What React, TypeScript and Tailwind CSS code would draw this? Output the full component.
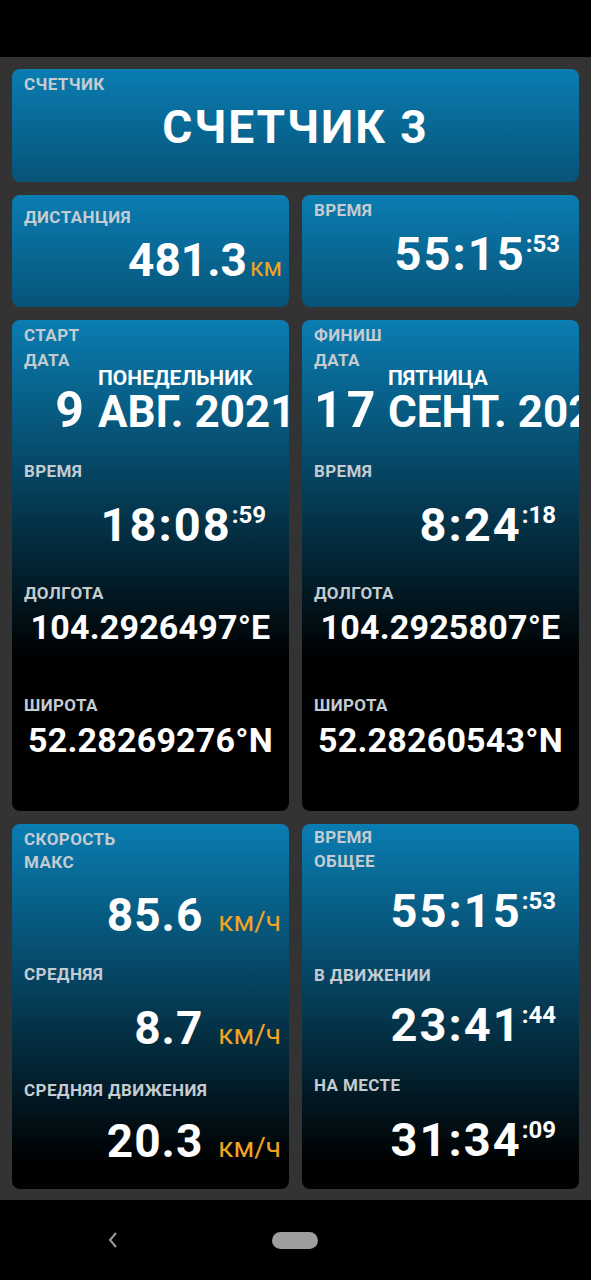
import React from "react";

const cardBg = "bg-[linear-gradient(180deg,#0a7db2_0px,#000_340px)]";

function Label({ children, className = "" }: { children: React.ReactNode; className?: string }) {
    return (
        <div className={`text-[17px] font-bold leading-[20px] tracking-[0.4px] text-[#c4ccd1] ${className}`}>
            {children}
        </div>
    );
}

function Time({ main, sec, className = "" }: { main: string; sec: string; className?: string }) {
    return (
        <div className={`flex justify-end items-start text-white font-bold ${className}`}>
            <span className="text-[47px] leading-[48px] tracking-[2px]">{main}</span>
            <span className="text-[24px] leading-[24px] mt-[2px]">:{sec}</span>
        </div>
    );
}

function Speed({ value, className = "" }: { value: string; className?: string }) {
    return (
        <div className={`flex justify-end items-baseline gap-[15px] ${className}`}>
            <span className="text-[46px] leading-[48px] font-bold text-white tracking-[1px]">{value}</span>
            <span className="text-[28px] leading-[30px] text-[#f0a422]">км/ч</span>
        </div>
    );
}

function Coord({ value, className = "" }: { value: string; className?: string }) {
    return (
        <div className={`text-center text-[34px] leading-[38px] font-bold text-white tracking-[0.2px] ${className}`}>
            {value}
        </div>
    );
}

function EndPoint({
    title,
    day,
    weekday,
    month,
    time,
    sec,
    lon,
    lat,
}: {
    title: string;
    day: string;
    weekday: string;
    month: string;
    time: string;
    sec: string;
    lon: string;
    lat: string;
}) {
    return (
        <div className={`flex-1 rounded-lg overflow-hidden ${cardBg} pt-[5px] pl-3`}>
            <Label>{title}</Label>
            <Label className="mt-[5px]">ДАТА</Label>
            <div className="flex items-baseline-last -mt-[4px]">
                <div className="w-[64px] shrink-0 text-right text-[50px] leading-[44px] font-bold text-white tracking-[4px] -mr-[4px]">
                    {day}
                </div>
                <div className="ml-[14px] flex flex-col min-w-0 whitespace-nowrap text-white font-bold">
                    <span className="text-[21px] leading-[24px]">{weekday}</span>
                    <span className="text-[44px] leading-[44px]">{month}</span>
                </div>
            </div>
            <Label className="mt-[27px]">ВРЕМЯ</Label>
            <Time main={time} sec={sec} className="mt-[20px] pr-[23px]" />
            <Label className="mt-[34px]">ДОЛГОТА</Label>
            <Coord value={lon} className="mt-[5px] pr-3" />
            <Label className="mt-[49px]">ШИРОТА</Label>
            <Coord value={lat} className="mt-[6px] pr-3" />
        </div>
    );
}

export default function App() {
    return (
        <div className="w-[591px] h-[1280px] bg-black flex flex-col font-['Roboto',sans-serif] overflow-hidden">
            <div className="h-[57px] shrink-0 bg-black" />

            <main className="h-[1143px] shrink-0 bg-[#333333] px-3 pt-3 flex flex-col gap-[13px]">
                {/* Counter name */}
                <div className={`h-[113px] shrink-0 rounded-lg ${cardBg} pt-[5px] pl-3`}>
                    <Label>СЧЕТЧИК</Label>
                    <div className="text-center text-[46px] leading-[48px] font-bold text-white tracking-[2px] mt-[9px] pr-3">
                        СЧЕТЧИК 3
                    </div>
                </div>

                {/* Distance / time */}
                <div className="h-[112px] shrink-0 flex gap-[13px]">
                    <div className={`flex-1 rounded-lg ${cardBg} pt-[12px] pl-3`}>
                        <Label>ДИСТАНЦИЯ</Label>
                        <div className="flex justify-end items-baseline pr-[7px] mt-[9px]">
                            <span className="text-[46px] leading-[48px] font-bold text-white">481.3</span>
                            <span className="text-[25px] leading-[26px] text-[#f0a422] ml-[3px]">км</span>
                        </div>
                    </div>
                    <div className={`flex-1 rounded-lg ${cardBg} pt-[5px] pl-3`}>
                        <Label>ВРЕМЯ</Label>
                        <Time main="55:15" sec="53" className="mt-[10px] pr-[19px]" />
                    </div>
                </div>

                {/* Start / finish */}
                <div className="h-[491px] shrink-0 flex gap-[13px]">
                    <EndPoint
                        title="СТАРТ"
                        day="9"
                        weekday="ПОНЕДЕЛЬНИК"
                        month="АВГ. 2021"
                        time="18:08"
                        sec="59"
                        lon="104.2926497°E"
                        lat="52.28269276°N"
                    />
                    <EndPoint
                        title="ФИНИШ"
                        day="17"
                        weekday="ПЯТНИЦА"
                        month="СЕНТ. 2021"
                        time="8:24"
                        sec="18"
                        lon="104.2925807°E"
                        lat="52.28260543°N"
                    />
                </div>

                {/* Speed / time stats */}
                <div className="h-[365px] shrink-0 flex gap-[13px]">
                    <div className={`flex-1 rounded-lg ${cardBg} pt-[5px] pl-3`}>
                        <Label>СКОРОСТЬ</Label>
                        <Label className="mt-[3px]">МАКС</Label>
                        <Speed value="85.6" className="mt-[19px] pr-[8px]" />
                        <Label className="mt-[25px]">СРЕДНЯЯ</Label>
                        <Speed value="8.7" className="mt-[20px] pr-[8px]" />
                        <Label className="mt-[28px]">СРЕДНЯЯ ДВИЖЕНИЯ</Label>
                        <Speed value="20.3" className="mt-[17px] pr-[8px]" />
                    </div>
                    <div className={`flex-1 rounded-lg ${cardBg} pt-[3px] pl-3`}>
                        <Label>ВРЕМЯ</Label>
                        <Label className="mt-[4px]">ОБЩЕЕ</Label>
                        <Time main="55:15" sec="53" className="mt-[16px] pr-[23px]" />
                        <Label className="mt-[30px]">В ДВИЖЕНИИ</Label>
                        <Time main="23:41" sec="44" className="mt-[16px] pr-[23px]" />
                        <Label className="mt-[26px]">НА МЕСТЕ</Label>
                        <Time main="31:34" sec="09" className="mt-[21px] pr-[23px]" />
                    </div>
                </div>
            </main>

            {/* Navigation bar */}
            <nav className="h-[80px] shrink-0 bg-black relative flex items-center">
                <svg className="ml-[106px]" width="14" height="20" viewBox="0 0 14 20">
                    <path d="M10 3 L4 10 L10 17" fill="none" stroke="#9a9a9a" strokeWidth="2" />
                </svg>
                <div className="ml-[152px] w-[46px] h-[17px] rounded-full bg-[#9e9e9e]" />
            </nav>
        </div>
    );
}
